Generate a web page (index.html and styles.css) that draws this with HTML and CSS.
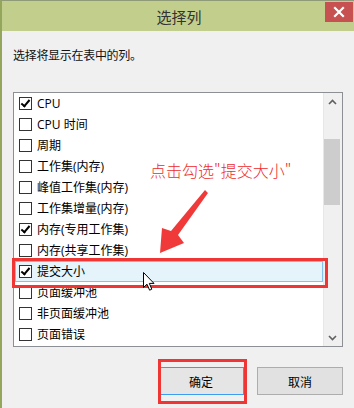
FILE: index.html
```html
<!DOCTYPE html>
<html lang="zh-CN">
<head>
<meta charset="utf-8">
<title>选择列</title>
<link rel="stylesheet" href="styles.css">
</head>
<body>
<div class="window">
  <div class="titlebar">
    <span class="title">选择列</span>
    <div class="close" aria-label="关闭">
      <svg width="12" height="12" viewBox="0 0 12 12"><path d="M2 2 L10 10 M10 2 L2 10" stroke="#fff" stroke-width="2.2" stroke-linecap="square"/></svg>
    </div>
  </div>
  <div class="content">
    <p class="desc">选择将显示在表中的列。</p>
    <div class="listbox">
      <ul class="items">
        <li class="item"><span class="cb checked"></span><span class="label">CPU</span></li>
        <li class="item"><span class="cb"></span><span class="label">CPU 时间</span></li>
        <li class="item"><span class="cb"></span><span class="label">周期</span></li>
        <li class="item"><span class="cb"></span><span class="label">工作集(内存)</span></li>
        <li class="item"><span class="cb"></span><span class="label">峰值工作集(内存)</span></li>
        <li class="item"><span class="cb"></span><span class="label">工作集增量(内存)</span></li>
        <li class="item"><span class="cb checked"></span><span class="label">内存(专用工作集)</span></li>
        <li class="item"><span class="cb"></span><span class="label">内存(共享工作集)</span></li>
        <li class="item selected"><span class="cb checked"></span><span class="label">提交大小</span></li>
        <li class="item"><span class="cb"></span><span class="label">页面缓冲池</span></li>
        <li class="item"><span class="cb"></span><span class="label">非页面缓冲池</span></li>
        <li class="item"><span class="cb"></span><span class="label">页面错误</span></li>
      </ul>
      <div class="scrollbar">
        <div class="sb-btn">
          <svg width="9" height="6" viewBox="0 0 9 6"><path d="M1 5 L4.5 1.5 L8 5" fill="none" stroke="#606060" stroke-width="1.6"/></svg>
        </div>
        <div class="sb-track"><div class="sb-thumb"></div></div>
        <div class="sb-btn">
          <svg width="9" height="6" viewBox="0 0 9 6"><path d="M1 1 L4.5 4.5 L8 1" fill="none" stroke="#606060" stroke-width="1.6"/></svg>
        </div>
      </div>
    </div>
    <div class="buttons">
      <button class="btn default">确定</button>
      <button class="btn">取消</button>
    </div>
  </div>

  <div class="annotation">点击勾选"提交大小"</div>
  <svg class="red-arrow" width="60" height="70" viewBox="155 188 60 70">
    <polygon points="205,190 208,193 178,235 184,243 160,253 162,228 171,231" fill="#f03a3a"/>
  </svg>
  <div class="mark mark-row"></div>
  <div class="mark mark-btn"></div>
  <svg class="cursor" width="13" height="20" viewBox="0 0 13 20">
    <path d="M0.5 0.5 L0.5 15.5 L4 12.2 L6.6 18.2 L8.8 17.2 L6.3 11.4 L11 11.4 Z" fill="#fff" stroke="#000" stroke-width="1"/>
  </svg>
</div>
</body>
</html>
```
FILE: styles.css
```css
* { box-sizing: border-box; }
html, body { margin: 0; padding: 0; }
body {
  width: 354px;
  height: 408px;
  overflow: hidden;
  font-family: "Open Sans", "Noto Sans CJK SC", sans-serif;
  font-size: 12px;
  color: #000;
  background: #f0f0f0;
}
.window {
  position: relative;
  width: 354px;
  height: 408px;
  border-top: 1px solid #8f9a78;
  border-left: 2px solid #93a65c;
  background: #f0f0f0;
  display: flex;
  flex-direction: column;
}
.titlebar {
  position: relative;
  height: 30px;
  background: #c2ce8c;
  display: flex;
  align-items: center;
  justify-content: center;
  flex: none;
}
.title {
  font-family: "Noto Sans CJK SC", sans-serif;
  font-size: 15px;
  line-height: 20px;
  color: #333;
  margin-top: 1px;
  margin-left: 2px;
}
.close {
  position: absolute;
  top: 1px;
  right: 1px;
  width: 28px;
  height: 20px;
  background: #c75050;
  display: flex;
  align-items: center;
  justify-content: center;
}
.content {
  flex: 1;
  padding: 16px 11px 0 11px;
  display: flex;
  flex-direction: column;
}
.desc {
  margin: 0;
  font-family: "Noto Sans CJK SC", sans-serif;
  font-size: 12px;
  line-height: 16px;
  color: #111;
  letter-spacing: -0.3px;
}
.listbox {
  margin-top: 29px;
  width: 330px;
  height: 255px;
  border: 1px solid #8c8f94;
  background: #fff;
  display: flex;
}
.items {
  list-style: none;
  margin: 0;
  padding: 0;
  width: 309px;
  flex: none;
}
.item {
  height: 21px;
  display: flex;
  align-items: center;
  padding-left: 5px;
  gap: 5px;
}
.item.selected {
  margin-left: 1px;
  padding-left: 3px;
  background: #e5f3fb;
  border: 1px solid #84c1ec;
}
.cb {
  width: 13px;
  height: 13px;
  border: 1px solid #333;
  background: #fff;
  flex: none;
  position: relative;
}
.cb.checked::after {
  content: "";
  position: absolute;
  left: 3px;
  top: 0px;
  width: 3px;
  height: 7px;
  border-right: 2px solid #000;
  border-bottom: 2px solid #000;
  transform: rotate(40deg);
}
.label {
  font-size: 12px;
  line-height: 16px;
  color: #000;
  white-space: nowrap;
}
.scrollbar {
  flex: 1;
  background: #f0f0f0;
  border-left: 1px solid #dfe8f5;
  display: flex;
  flex-direction: column;
}
.sb-btn {
  height: 17px;
  display: flex;
  align-items: center;
  justify-content: center;
  padding-right: 2px;
}
.sb-track {
  flex: 1;
  padding-top: 29px;
}
.sb-thumb {
  width: 16px;
  height: 66px;
  background: #cdcdcd;
}
.buttons {
  margin-top: 20px;
  display: flex;
  justify-content: flex-end;
  gap: 13px;
}
.btn {
  width: 86px;
  height: 28px;
  margin: 0;
  padding: 0;
  font-family: "Noto Sans CJK SC", sans-serif;
  font-size: 12px;
  color: #000;
  background: #e1e1e1;
  border: 1px solid #adadad;
}
.btn.default {
  background: #e5e5e5;
  border: 1px solid #3c9cf0;
}
.annotation {
  position: absolute;
  left: 148px;
  top: 158px;
  font-family: "Noto Sans CJK SC", sans-serif;
  font-size: 16px;
  line-height: 22px;
  font-weight: 300;
  color: #ee2a2a;
  white-space: nowrap;
}
.red-arrow {
  position: absolute;
  left: 153px;
  top: 187px;
}
.mark {
  position: absolute;
  border: 3px solid #f03535;
}
.mark-row {
  left: 10px;
  top: 257px;
  width: 316px;
  height: 30px;
}
.mark-btn {
  left: 156px;
  top: 358px;
  width: 89px;
  height: 45px;
}
.cursor {
  position: absolute;
  left: 141px;
  top: 271px;
}
```
